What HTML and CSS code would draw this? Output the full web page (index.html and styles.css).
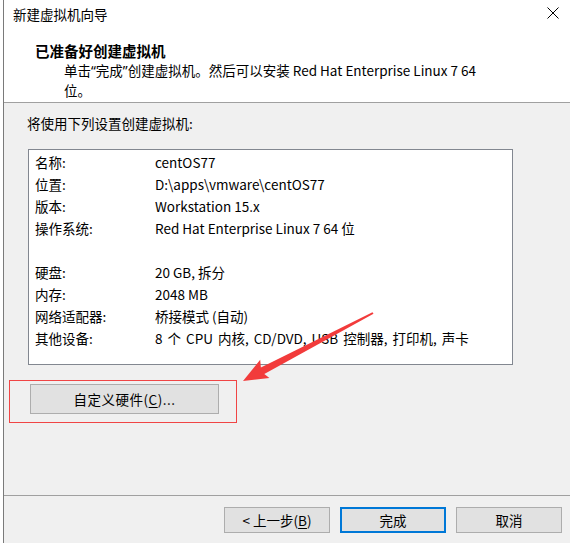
FILE: index.html
```html
<!DOCTYPE html>
<html lang="zh-CN">
<head>
<meta charset="utf-8">
<title>新建虚拟机向导</title>
<link rel="stylesheet" href="styles.css">
</head>
<body>
<div class="window">
  <div class="titlebar">
    <span class="title">新建虚拟机向导</span>
    <svg class="close" width="12" height="12" viewBox="0 0 12 12"><path d="M0.5 0.5 L11.5 11.5 M11.5 0.5 L0.5 11.5" stroke="#000" stroke-width="1" fill="none"/></svg>
  </div>
  <div class="header">
    <div class="heading">已准备好创建虚拟机</div>
    <div class="subtitle">单击<span class="q">“</span>完成<span class="q">”</span>创建虚拟机。然后可以安装 Red Hat Enterprise Linux 7 64<br>位。</div>
  </div>
  <div class="content">
    <div class="intro">将使用下列设置创建虚拟机:</div>
    <div class="listbox">
      <div class="row"><span class="label">名称:</span><span class="value">centOS77</span></div>
      <div class="row"><span class="label">位置:</span><span class="value">D:\apps\vmware\centOS77</span></div>
      <div class="row"><span class="label">版本:</span><span class="value">Workstation 15.x</span></div>
      <div class="row"><span class="label">操作系统:</span><span class="value">Red Hat Enterprise Linux 7 64 位</span></div>
      <div class="row blank"></div>
      <div class="row"><span class="label">硬盘:</span><span class="value">20 GB, 拆分</span></div>
      <div class="row"><span class="label">内存:</span><span class="value">2048 MB</span></div>
      <div class="row"><span class="label">网络适配器:</span><span class="value">桥接模式 (自动)</span></div>
      <div class="row"><span class="label">其他设备:</span><span class="value wide">8 个 CPU 内核, CD/DVD, USB 控制器, 打印机, 声卡</span></div>
    </div>
    <button class="btn custom">自定义硬件(<u>C</u>)...</button>
  </div>
  <div class="footer">
    <button class="btn nav">&lt; 上一步(<u>B</u>)</button>
    <button class="btn nav primary">完成</button>
    <button class="btn nav">取消</button>
  </div>
</div>
<div class="annot-box"></div>
<svg class="annot-arrow" width="570" height="543" viewBox="0 0 570 543">
  <polygon points="243,381 260.2,359.8 260.9,367.4 372.5,312.2 373.5,313.8 264.3,374.0 269.4,377.9" fill="#f23b3b"/>
</svg>
</body>
</html>
```

FILE: styles.css
```css
* { box-sizing: border-box; }
html, body {
  margin: 0;
  padding: 0;
  width: 570px;
  height: 543px;
  overflow: hidden;
  background: #ffffff;
}
body {
  position: relative;
  font-family: "Noto Sans CJK SC", "Noto Sans", sans-serif;
  font-size: 13.5px;
  color: #000;
}
.window {
  margin-left: 3px;
  height: 543px;
  border-left: 1px solid #7a7a7a;
  display: flex;
  flex-direction: column;
}
.titlebar {
  height: 28px;
  display: flex;
  align-items: center;
  justify-content: space-between;
  padding-left: 9px;
  padding-right: 11px;
  background: #fff;
}
.title { line-height: 20px; }
.close { display: block; margin-top: -3px; }
.header {
  background: #fff;
  padding-top: 13px;
  border-bottom: 1px solid #a0a0a0;
  height: 75px;
}
.heading {
  padding-left: 31px;
  font-weight: bold;
  font-size: 14.5px;
  line-height: 20px;
}
.subtitle {
  padding-left: 60px;
  line-height: 19px;
}
.q { font-family: "Noto Sans", sans-serif; }
.content {
  flex: 1;
  background: #f0f0f0;
  padding-top: 10px;
}
.intro {
  padding-left: 23px;
  line-height: 20px;
}
.listbox {
  margin-top: 16px;
  margin-left: 24px;
  width: 485px;
  height: 216px;
  background: #fff;
  border: 1px solid #828790;
  padding-top: 1px;
  padding-left: 6px;
}
.row {
  display: flex;
  height: 22px;
  line-height: 22px;
  white-space: nowrap;
}
.label { width: 120px; flex: none; }
.wide { word-spacing: 2px; }
.btn {
  font-family: inherit;
  font-size: inherit;
  color: #000;
  background: #e1e1e1;
  border: 1px solid #adadad;
  padding: 0;
  margin: 0;
}
.btn u { text-decoration-thickness: 1px; text-underline-offset: 2px; }
.custom {
  display: block;
  margin-top: 19px;
  margin-left: 26px;
  width: 189px;
  height: 30px;
  letter-spacing: 0.5px;
}
.footer {
  height: 48px;
  background: #f0f0f0;
  border-top: 1px solid #a0a0a0;
  display: flex;
  justify-content: flex-end;
  align-items: flex-start;
  gap: 10px;
  padding-top: 11px;
  padding-right: 8px;
}
.nav {
  width: 106px;
  height: 26px;
}
.primary {
  border: 2px solid #0078d7;
}
.annot-box {
  position: absolute;
  left: 9px;
  top: 380px;
  width: 228px;
  height: 43px;
  border: 1px solid #f04545;
}
.annot-arrow {
  position: absolute;
  left: 0;
  top: 0;
  pointer-events: none;
}
```
